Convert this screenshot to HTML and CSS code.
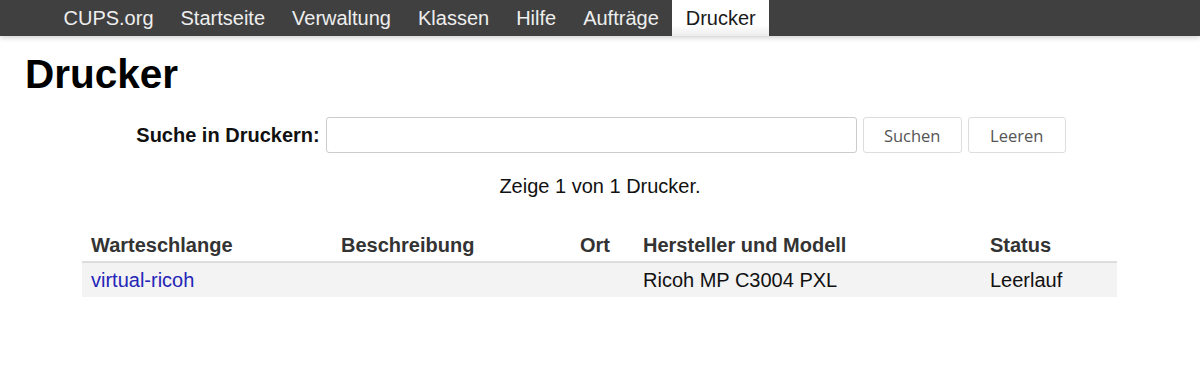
FILE: index.html
```html
<!DOCTYPE html>
<html lang="de">
<head>
	<meta charset="UTF-8">
	<title>Drucker - CUPS</title>
	<link rel="stylesheet" href="styles.css">
</head>
<body>
	<div class="header">
		<ul class="nav">
			<li><a href="#">CUPS.org</a></li>
			<li><a href="#">Startseite</a></li>
			<li><a href="#">Verwaltung</a></li>
			<li><a href="#">Klassen</a></li>
			<li><a href="#">Hilfe</a></li>
			<li><a href="#">Aufträge</a></li>
			<li class="active"><a href="#">Drucker</a></li>
		</ul>
	</div>

	<div class="body">
		<h1 class="title">Drucker</h1>

		<form class="search" action="#">
			<label class="searchLabel" for="query">Suche in Druckern:</label>
			<input type="search" class="searchInput" id="query" name="QUERY">
			<button type="submit" class="btn">Suchen</button>
			<button type="button" class="btn">Leeren</button>
		</form>

		<p class="count">Zeige 1 von 1 Drucker.</p>

		<table class="list">
			<thead>
				<tr>
					<th class="colQueue">Warteschlange</th>
					<th class="colDesc">Beschreibung</th>
					<th class="colLoc">Ort</th>
					<th class="colModel">Hersteller und Modell</th>
					<th class="colStatus">Status</th>
				</tr>
			</thead>
			<tbody>
				<tr>
					<td><a href="#">virtual-ricoh</a></td>
					<td></td>
					<td></td>
					<td>Ricoh MP C3004 PXL</td>
					<td>Leerlauf</td>
				</tr>
			</tbody>
		</table>
	</div>
</body>
</html>
```

FILE: styles.css
```css
*{
	margin: 0;
	padding: 0;
	box-sizing: border-box;
}
body{
	font-family: "Liberation Sans", Arial, sans-serif;
	font-size: 20px;
	color: #111;
	background: #fff;
}
a{
	text-decoration: none;
}

/* top bar */
.header{
	height: 36px;
	background-color: #404040;
	box-shadow: 0 2px 5px rgba(0,0,0,0.18);
}
.nav{
	list-style: none;
	display: flex;
	margin-left: 50px;
}
.nav li a{
	display: block;
	height: 36px;
	line-height: 37px;
	padding: 0 13.5px;
	color: #eee;
}
.nav li.active a{
	color: #1a1a1a;
	background: linear-gradient(#fff 70%, #ececec);
}

/* content */
.body{
	padding: 14px 0 0 0;
}
.title{
	font-size: 40.5px;
	line-height: 48px;
	font-weight: bold;
	color: #000;
	margin-left: 25px;
}
.search{
	display: flex;
	justify-content: center;
	align-items: center;
	gap: 6px;
	margin-top: 19px;
	padding-left: 2px;
}
.searchLabel{
	font-weight: bold;
	color: #111;
}
.searchInput{
	width: 531px;
	height: 36px;
	border: 1px solid #ccc;
	border-radius: 3px;
	background: #fff;
	font-size: 18px;
	padding: 0 6px;
}
.btn{
	height: 36px;
	border: 1px solid #ddd;
	border-radius: 3px;
	background: #fff;
	color: #555;
	font-family: "Open Sans", "Noto Sans", sans-serif;
	font-size: 16.5px;
}
.btn:first-of-type{
	width: 99px;
}
.btn:last-of-type{
	width: 98px;
}
.count{
	text-align: center;
	line-height: 24px;
	margin-top: 21px;
	color: #111;
}

/* printer list */
.list{
	width: 1035px;
	margin: 27px 0 0 82px;
	border-collapse: collapse;
	text-align: left;
}
.list th{
	height: 37px;
	padding: 5px 9px 0 9px;
	font-weight: bold;
	color: #333;
	border-bottom: 2px solid #ddd;
}
.list td{
	height: 35px;
	padding: 1px 9px 0 9px;
	background-color: #f3f3f3;
	color: #111;
}
.list td a{
	color: #2424b8;
}
.colQueue{
	width: 250px;
}
.colDesc{
	width: 239px;
}
.colLoc{
	width: 63px;
}
.colModel{
	width: 347px;
}
```
